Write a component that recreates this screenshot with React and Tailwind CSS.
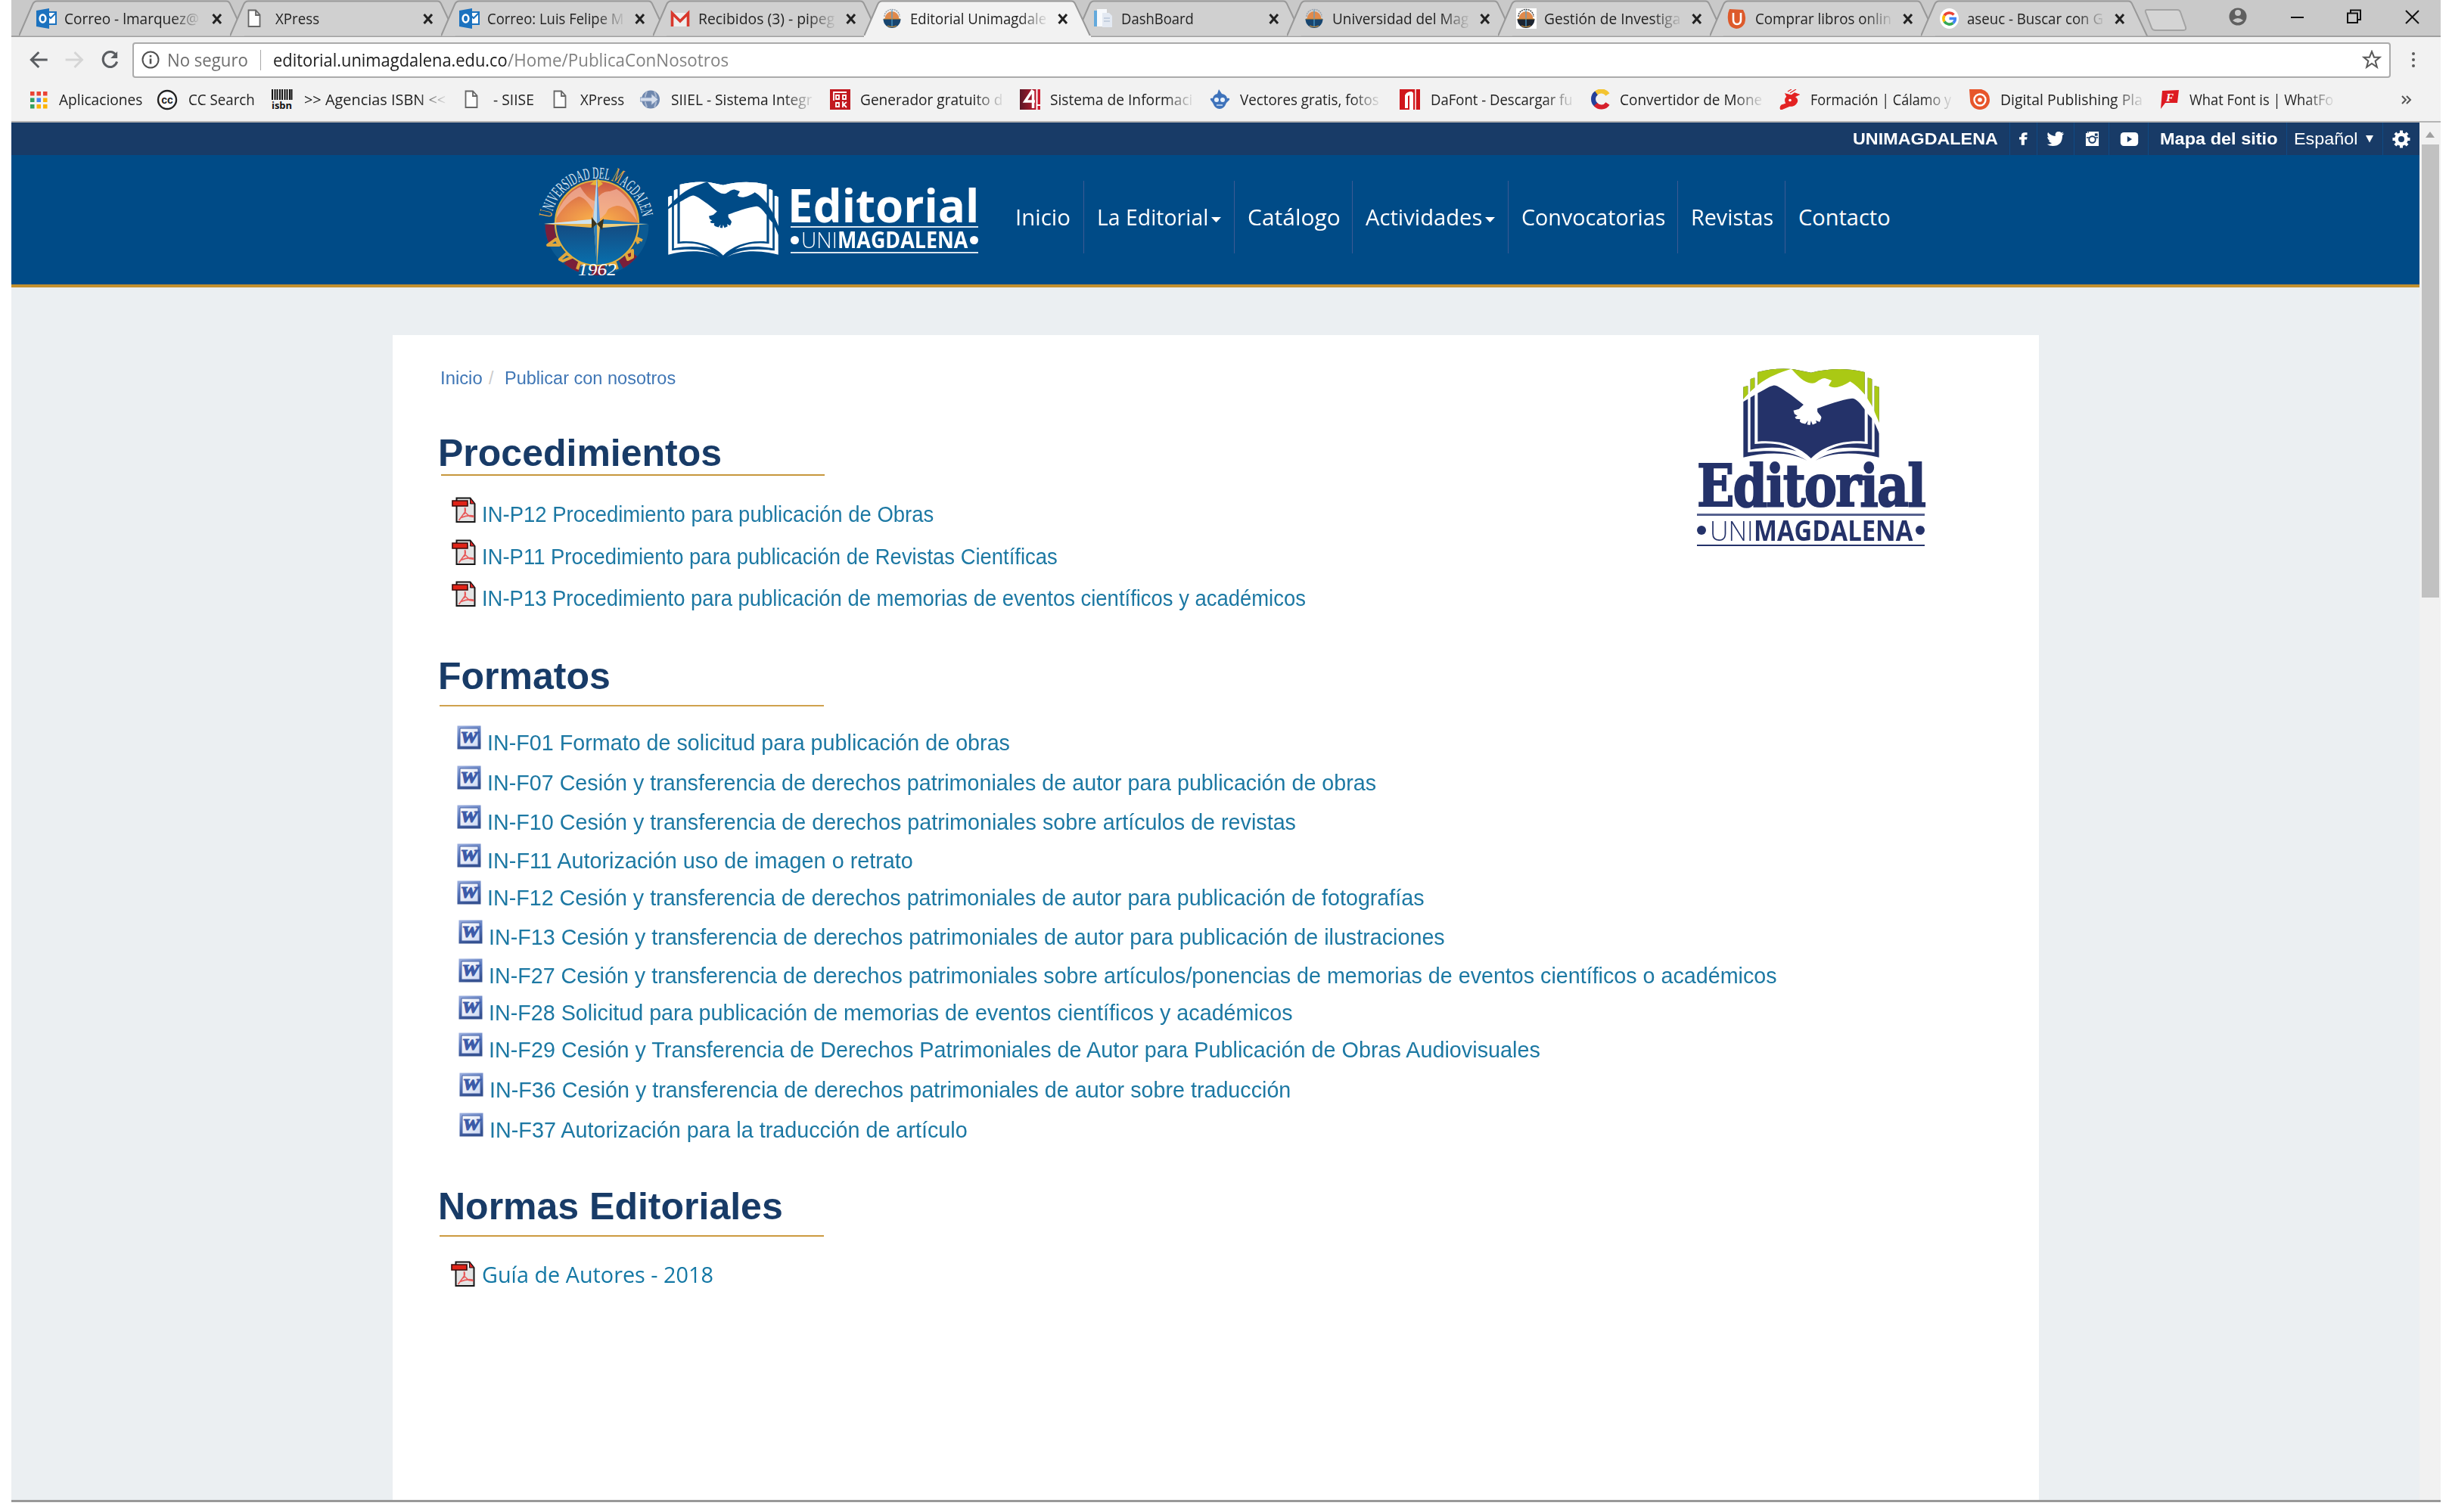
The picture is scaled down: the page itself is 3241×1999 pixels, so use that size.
import { useLayoutEffect, useRef } from "react";

/* Text squeezed or stretched horizontally so that it fills the width of its box. */
function Fit({ className = "", children }) {
  const box = useRef(null);
  const text = useRef(null);
  useLayoutEffect(() => {
    const scale = box.current.clientWidth / text.current.offsetWidth;
    text.current.style.transform = `scaleX(${scale})`;
  });
  return (
    <span ref={box} className={`block shrink-0 whitespace-pre ${className}`}>
      <span ref={text} className="inline-block origin-left">{children}</span>
    </span>
  );
}

/* ---------- small icons ---------- */

const Outlook = () => (
  <svg viewBox="0 0 27 27" className="size-[27px]">
    <rect x="13" y="5" width="13" height="16" fill="#fff" stroke="#1b72bf" strokeWidth="2" />
    <path d="M13 7l6 6 7-7" fill="none" stroke="#1b72bf" strokeWidth="2" />
    <path d="M0 3L17 0v27L0 24z" fill="#1b72bf" />
    <ellipse cx="8.5" cy="13.5" rx="3.8" ry="5" fill="none" stroke="#fff" strokeWidth="2.6" />
  </svg>
);
const Page = () => (
  <svg viewBox="0 0 27 27" className="size-[27px]">
    <path d="M1.500 2.500h9.500l5.500 6v15.500h-15zM11 2.500v6.500h5.500" fill="#fdfdfd" stroke="#666" strokeWidth="1.800" />
  </svg>
);
const Gmail = () => (
  <svg viewBox="0 0 27 27" className="size-[27px]">
    <path d="M2 6h22v18H2z" fill="#eee" />
    <path d="M2.500 24V6.500L13 17 23.500 6.500V24" fill="none" stroke="#d9382c" strokeWidth="3.600" />
  </svg>
);
const MiniSeal = ({ boxed }) => (
  <svg viewBox="0 0 27 27" className="size-[27px]">
    {boxed && <path d="M0 0h27v27H0z" fill="#fff" />}
    <path d="M3 11C3 5 8 1.500 13 1.500S23 5 23 11" fill="none" stroke={boxed ? "#444" : "#9aa3ad"} strokeWidth="1.500" strokeDasharray="2 1" />
    <path d="M3.500 14a9.500 10 0 0 1 19 0z" fill="#e08a4c" />
    <path d="M1.500 14h23a11.500 12 0 0 1-23 0z" fill={boxed ? "#1c2430" : "#17456f"} />
    <path d="M13 2v23" stroke="#4da0d0" strokeWidth="1.200" />
    <path d="M2 14h22M7 23q6 3 12 0" stroke="#c98b35" strokeWidth="1.200" fill="none" />
  </svg>
);
const Dash = () => (
  <svg viewBox="0 0 27 27" className="size-[27px]">
    <path d="M1 3h6v21H1z" fill="#62a9dc" />
    <path d="M5 1h13v23H5z" fill="#f7f9fc" />
    <path d="M12 6h9l4 4v15H12z" fill="#e3e9f2" />
    <path d="M14 13h8M14 17h8" stroke="#c4cfdf" strokeWidth="2" />
  </svg>
);
const UIcon = () => (
  <svg viewBox="0 0 27 27" className="size-[27px]">
    <path d="M3 1l18 1q5 8 2 18-4 7-11 7Q2 26 1 15 0 7 3 1z" fill="#dd5a2b" />
    <path d="M8 6v9q0 6 5 6t5-6V6" fill="none" stroke="#fff" strokeWidth="2.600" />
  </svg>
);
const GIcon = () => (
  <svg viewBox="0 0 27 27" className="size-[27px]">
    <ellipse cx="13.500" cy="13.500" rx="12.500" ry="13.500" fill="#fff" />
    <g fill="none" strokeWidth="3.600">
      <path d="M19.500 8.500A8 8 0 0 0 7 9.500" stroke="#ea4335" />
      <path d="M7 9.500a8 8 0 0 0 0 8" stroke="#fbbc05" />
      <path d="M7 17.500a8 8 0 0 0 11.500 2" stroke="#34a853" />
      <path d="M18.500 19.500q3-2.500 2.800-6H13.500" stroke="#4285f4" />
    </g>
  </svg>
);
const Apps = () => (
  <svg viewBox="0 0 24 24" className="size-6">
    {["#ea4335", "#ea4335", "#ea4335", "#34a060", "#4285f4", "#fbb305", "#34a060", "#fbb305", "#fbb305"].map((c, i) => (
      <rect key={i} x={(i % 3) * 8.5} y={1 + Math.floor(i / 3) * 8.5} width="5.500" height="5.500" fill={c} />
    ))}
  </svg>
);
const CC = () => (
  <svg viewBox="0 0 28 28" className="size-7">
    <circle cx="14" cy="14" r="12" fill="#fff" stroke="#222" strokeWidth="2.400" />
    <text x="14" y="18.500" textAnchor="middle" fontSize="14" fontWeight="700" fontFamily="Liberation Sans, sans-serif" fill="#222">cc</text>
  </svg>
);
const Isbn = () => (
  <svg viewBox="0 0 27 27" className="size-[27px] overflow-visible">
    <path d="M1 0v14M4.500 0v14M7.500 0v14M11 0v14M14 0v14M17.500 0v14M20.500 0v14M24 0v14M26.500 0v14" stroke="#111" strokeWidth="2" />
    <text x="0" y="26" fontSize="13" fontWeight="700" textLength="27" lengthAdjust="spacingAndGlyphs" fontFamily="Open Sans, sans-serif" fill="#111">isbn</text>
  </svg>
);
const Globe = () => (
  <svg viewBox="0 0 27 27" className="size-[27px]">
    <circle cx="14" cy="13.500" r="12" fill="#6d86ad" />
    <path d="M9 3q-5 10 0 21M19 3q5 10 0 21" stroke="#a9b8d0" strokeWidth="2" fill="none" />
    <path d="M0 11h15V6l9 7.500-9 7.500v-5H0z" fill="#d5deec" stroke="#8298bb" strokeWidth="1" />
  </svg>
);
const RedBook = () => (
  <svg viewBox="0 0 27 27" className="size-[27px]">
    <path d="M0 0h27v27H0z" fill="#c2191f" />
    <path d="M5 15V4h17M8 8h4v5H8zM17 8h4v5h-4zM8 18h4v5H8zM17 16v8M22 17l-4 3 4 4" fill="none" stroke="#fff" strokeWidth="1.800" />
  </svg>
);
const Four = () => (
  <svg viewBox="0 0 27 27" className="size-[27px]">
    <defs><linearGradient id="four" x2="1" y2="0"><stop stopColor="#5b1626" /><stop offset="1" stopColor="#d41c30" /></linearGradient></defs>
    <path d="M0 0h27v27H0z" fill="url(#four)" />
    <path d="M17 1L7 16h13M17.500 2v23" fill="none" stroke="#fff" strokeWidth="3.500" />
    <path d="M22.500 0v27" stroke="#fff" strokeWidth="2" />
    <path d="M22 21h5" stroke="#fff" strokeWidth="2" />
  </svg>
);
const Robot = () => (
  <svg viewBox="0 0 27 27" className="size-[27px]">
    <path d="M12 0l4 6q6 1 7 6 4-1 3 2l-4 4q-3 8-9 8t-9-8l-3-4q-1-3 3-2 1-5 6-6z" fill="#3f73bb" />
    <circle cx="9" cy="14" r="3" fill="#e9f1fb" /><circle cx="17" cy="14" r="3" fill="#e9f1fb" />
    <path d="M9 21h8" stroke="#cfe0f5" strokeWidth="1.500" />
  </svg>
);
const DaFont = () => (
  <svg viewBox="0 0 27 27" className="size-[27px]">
    <path d="M0 0h27v27H0z" fill="#d0161b" />
    <path d="M7 25V8q2-5 9-5l2 2v22h-5V8l-2 1v16z" fill="#fff" />
    <path d="M21 0v27" stroke="#fff" strokeWidth="1.500" />
  </svg>
);
const CIcon = () => (
  <svg viewBox="0 0 27 27" className="size-[27px]">
    <path d="M6 6a10 10 0 0 1 16 1" fill="none" stroke="#f3c431" strokeWidth="6" />
    <path d="M7 5a10 10 0 0 0 0 16" fill="none" stroke="#24409a" strokeWidth="6" />
    <path d="M6 20a10 10 0 0 0 16-1" fill="none" stroke="#d6202c" strokeWidth="6" />
  </svg>
);
const Calamo = () => (
  <svg viewBox="0 0 27 27" className="size-[27px]">
    <path d="M8 6l8 2 4-3 6 2-6 3q6 4 2 9-3 4-8 3L2 27q-2-3 1-6l6-2q-3-6 1-9zM11 3l5-3M14 5l8-5" fill="#e32222" stroke="#e32222" strokeWidth="1.200" />
    <circle cx="14" cy="14.500" r="1.800" fill="#fff" />
  </svg>
);
const Target = () => (
  <svg viewBox="0 0 27 27" className="size-[27px]">
    <path d="M0 0h16q11 3 11 14a13 13 0 0 1-26 0z" fill="#e7552b" />
    <circle cx="14" cy="14" r="7.500" fill="none" stroke="#fff" strokeWidth="2.400" />
    <circle cx="14" cy="14" r="2.800" fill="#fff" />
  </svg>
);
const FIcon = () => (
  <svg viewBox="0 0 27 27" className="size-[27px]">
    <path d="M3 2l22-1-2 17H7l-6 8z" fill="#dd1b22" />
    <text x="8" y="15.500" fontSize="15" fontWeight="700" fontStyle="italic" fontFamily="Liberation Serif, serif" fill="#fff">F</text>
  </svg>
);

const Pdf = () => (
  <svg viewBox="0 0 32 34" className="h-[34px] w-8 shrink-0">
    <path d="M6.500 5V1.500h18l6 7.500v24h-24V12" fill="#e4e4e4" stroke="#161616" strokeWidth="2" />
    <path d="M9 4.500h14l4 5v-1z" fill="#fff" />
    <path d="M24.500 1.500l6 7.500h-6z" fill="#e02424" stroke="#161616" />
    <path d="M17.500 14v6l-8 11M17.500 20l6 5.500 6.500 1M12 27.500q9-4 17-2.500M17.500 14q2 4-1 9" fill="none" stroke="#e85858" strokeWidth="1.600" />
    <path d="M1 5h20v7H1z" fill="#e02418" stroke="#3a0a0a" strokeWidth="1.600" />
  </svg>
);
const Word = () => (
  <svg viewBox="0 0 32 32" className="h-8 w-8 shrink-0">
    <defs>
      <linearGradient id="wb" x2="0.300" y2="1"><stop stopColor="#9fb2e0" /><stop offset="0.500" stopColor="#5877bd" /><stop offset="1" stopColor="#34508f" /></linearGradient>
      <linearGradient id="wp" x2="1" y2="1"><stop stopColor="#fff" /><stop offset="1" stopColor="#cfd9f2" /></linearGradient>
    </defs>
    <path d="M0.500 0.500h31v31h-31z" fill="url(#wb)" />
    <path d="M4 4h24v24H4z" fill="url(#wp)" stroke="#4763a6" strokeWidth="1" />
    <text x="4.500" y="23" fontSize="22" fontWeight="700" fontStyle="italic" textLength="23" lengthAdjust="spacingAndGlyphs" fontFamily="Liberation Serif, serif" fill="#3c5aa8" stroke="#3c5aa8" strokeWidth="1.200">W</text>
  </svg>
);

/* ---------- logos ---------- */

function Pages() {
  return (
    <>
      <path d="M366 153Q440 134 510 142L578 155Q690 128 791 153V430C700 422 625 450 578 497C530 450 460 422 366 430z" />
      <path d="M337 181Q345 176 354 176V440C430 432 480 445 520 468C470 450 400 450 337 462z" />
      <path d="M309 213Q318 208 327 208V473C420 462 500 465 562 506C500 470 400 470 309 493z" />
      <path d="M820 181Q812 176 803 176V440C727 432 677 445 637 468C687 450 757 450 820 462z" />
      <path d="M848 213Q839 208 830 208V473C737 462 657 465 595 506C657 470 757 470 848 493z" />
    </>
  );
}
function Book({ id, top, bottom, bird, className }) {
  return (
    <svg viewBox="308 138 541 371" preserveAspectRatio="none" className={className}>
      <clipPath id={id}>
        <path d="M300 130H860V376L846 372L815 310L790 270L741 225L578 240L497 180L366 220L300 269z" />
      </clipPath>
      <g fill={bottom}><Pages /></g>
      <g fill={top} clipPath={`url(#${id})`}><Pages /></g>
      <path
        fill={bird}
        d="M306 264L340 228L366 205C410 170 460 152 497 141L503 143C540 186 565 200 590 197C606 190 615 178 633 177L660 186L648 206C665 222 700 213 733 190C760 206 780 230 792 243L820 288L849 355V398L835 366L820 338L803 320L790 300C775 280 758 258 741 258C700 262 640 285 603 298V310C610 324 622 328 618 338L612 352L597 345L600 356L584 363L578 347L574 364L562 362L566 346L555 360L540 356L533 350L535 341L518 339L514 332L524 327L512 320L508 306L530 300L548 283L500 245C470 225 445 205 430 206C410 210 390 225 366 237L306 273z"
      />
    </svg>
  );
}

function Wordmark({ name, light, heavy, lines, bullet }) {
  return (
    <>
      {name}
      <div className={lines[0]} />
      <div className="flex items-center justify-between">
        <span className={bullet} />
        <div className="flex">
          {light}
          {heavy}
        </div>
        <span className={bullet} />
      </div>
      <div className={lines[1]} />
    </>
  );
}

function Seal() {
  return (
    <svg viewBox="0 0 156 151" className="mt-[11px] h-[151px] w-[156px] shrink-0 overflow-visible">
      <defs>
        <radialGradient id="sky" cx="0.500" cy="0.950" r="0.900"><stop stopColor="#fbb54a" /><stop offset="0.500" stopColor="#e8884a" /><stop offset="1" stopColor="#cc5a45" /></radialGradient>
        <linearGradient id="sea" x2="0" y2="1"><stop stopColor="#154a80" /><stop offset="1" stopColor="#0870ae" /></linearGradient>
        <path id="arc" d="M21.500 72.500A61 61 0 0 1 142.500 74" />
      </defs>
      <path d="M19.500 81A62.500 61 0 0 0 144.500 81" fill="none" stroke="#0b5a93" strokeWidth="12" />
      <path d="M19.500 81A62.500 61 0 0 0 144.500 81" fill="none" stroke="#7a1f3a" strokeWidth="12" strokeDasharray="24 30 20 16 18 22 22 60" />
      <g fill="none" stroke="#e0a73e" strokeWidth="4" strokeLinejoin="round">
        <path d="M17 108l11-8 4 8zM33 127l9-8 7 5-12 5zM56 140l3-9 9 3M109 140l-3-9-9 3M123 127l-3-8 9-4v9zM137 106l-4-8 9 4" />
      </g>
      <path d="M27 79a55 56 0 0 1 110 0z" fill="url(#sky)" />
      <path d="M27 79a55 56 0 0 0 110 0z" fill="url(#sea)" />
      <path d="M29 66Q40 40 60 31Q70 48 80 50Q88 36 99 37L108 34Q128 46 135 76Q122 56 108 56Q96 58 94 66L88 72Q82 76 76 70L77 62Q66 44 58 44Q42 50 28 73z" fill="#f3b6a3" opacity="0.700" />
      <ellipse cx="82" cy="79" rx="55" ry="56" fill="none" stroke="#e0b040" strokeWidth="2.200" />
      <path d="M82 16l4 60-4 4-5-4z" fill="#5a97d8" /><path d="M82 16v64l-5-4z" fill="#bcd9ea" />
      <path d="M82 137l-4-54 4-4 4 4z" fill="#e6bd62" /><path d="M82 137V79l-4 4z" fill="#2f7fb8" />
      <path d="M12 80l62-5 8 5-8 5z" fill="#e8b44c" /><path d="M12 80l62-6 8 6z" fill="#cfe3ee" />
      <path d="M150 80l-60-6-8 6 8 5z" fill="#2478b4" /><path d="M150 80l-60 5-8-5z" fill="#efcf7f" />
      <path d="M73 28l8-7v8zM83 20l7 7-7 5z" fill="#e7b437" />
      <path d="M75 71l7 9-7 6zM91 73l-9 7 7 8z" fill="#3a3420" />
      <text fontSize="22" fontFamily="Liberation Serif, serif" fill="#dfe8f2">
        <textPath href="#arc" textLength="181" lengthAdjust="spacingAndGlyphs">
          <tspan fill="#dfa344" fontSize="25">U</tspan>NIVERSIDAD DEL <tspan fill="#dfa344" fontSize="28" fontStyle="italic">M</tspan>AGDALENA
        </textPath>
      </text>
      <text x="57" y="148" fontSize="23" fontStyle="italic" textLength="51" lengthAdjust="spacingAndGlyphs" fontFamily="Liberation Serif, serif" fill="#fff">1962</text>
    </svg>
  );
}

/* ---------- browser chrome ---------- */

const tabs = [
  { icon: <Outlook />, text: "Correo - lmarquez@", w: "w-[178px]" },
  { icon: <Page />, text: "XPress", w: "w-[58px]" },
  { icon: <Outlook />, text: "Correo: Luis Felipe M", w: "w-[180px]" },
  { icon: <Gmail />, text: "Recibidos (3) - pipeg", w: "w-[180px]" },
  { icon: <MiniSeal />, text: "Editorial Unimagdale", w: "w-[180px]", active: true },
  { icon: <Dash />, text: "DashBoard", w: "w-[96px]" },
  { icon: <MiniSeal />, text: "Universidad del Mag", w: "w-[180px]" },
  { icon: <MiniSeal boxed />, text: "Gestión de Investiga", w: "w-[180px]" },
  { icon: <UIcon />, text: "Comprar libros onlin", w: "w-[180px]" },
  { icon: <GIcon />, text: "aseuc - Buscar con G", w: "w-[180px]" },
];
const fade = "[mask-image:linear-gradient(to_right,black_80%,transparent_102%)]";

function Tab({ icon, text, w, active }) {
  const long = text.length > 10;
  return (
    <div className={`relative -mr-[20.600px] h-[49px] w-[300px] shrink-0 ${active ? "z-10" : ""}`}>
      <svg viewBox="0 0 300 49" className="absolute inset-0 h-[49px] w-[300px]">
        <path d="M0 47.500L18 6Q20 1.500 24 1.500H274Q278 1.500 279.500 6L299 47.500" fill={active ? "#f2f2f2" : "#d0d0d0"} stroke="#989898" strokeWidth="2" />
        {active && <path d="M0 49v-2h300v2z" fill="#f2f2f2" />}
      </svg>
      <div className="relative flex h-[49px] items-center pl-[23.500px]">
        <div className="w-[37px] shrink-0">{icon}</div>
        <div className="w-[194px] shrink-0">
          <Fit className={`${w} ${long ? fade : ""}`}>{text}</Fit>
        </div>
        <svg viewBox="0 0 16 16" className="size-4"><path d="M2.500 2L13 14M13 2L2.500 14" stroke="#222" strokeWidth="3" /></svg>
      </div>
    </div>
  );
}

const bookmarks = [
  { icon: <Apps />, slot: "w-[38px]", text: "Aplicaciones", box: "w-[129px]", w: "w-[110px]" },
  { icon: <CC />, slot: "w-[42px]", text: "CC Search", box: "w-[110px]", w: "w-[88px]" },
  { icon: <Isbn />, slot: "w-[43px]", text: ">> Agencias ISBN <<", box: "w-[212px]", w: "w-[187px]", fade: true },
  { icon: <Page />, slot: "w-[38px]", text: "- SIISE", box: "w-[79px]", w: "w-[54px]" },
  { icon: <Page />, slot: "w-[36px]", text: "XPress", box: "w-[79px]", w: "w-[58px]" },
  { icon: <Globe />, slot: "w-[41px]", text: "SIIEL - Sistema Integr", box: "w-[210px]", w: "w-[187px]", fade: true },
  { icon: <RedBook />, slot: "w-[40px]", text: "Generador gratuito d", box: "w-[211px]", w: "w-[188px]", fade: true },
  { icon: <Four />, slot: "w-[40px]", text: "Sistema de Informaci", box: "w-[211px]", w: "w-[188px]", fade: true },
  { icon: <Robot />, slot: "w-[40px]", text: "Vectores gratis, fotos", box: "w-[211px]", w: "w-[184px]", fade: true },
  { icon: <DaFont />, slot: "w-[41px]", text: "DaFont - Descargar fu", box: "w-[212px]", w: "w-[188px]", fade: true },
  { icon: <CIcon />, slot: "w-[38px]", text: "Convertidor de Mone", box: "w-[211px]", w: "w-[188px]", fade: true },
  { icon: <Calamo />, slot: "w-[41px]", text: "Formación | Cálamo y", box: "w-[210px]", w: "w-[186px]", fade: true },
  { icon: <Target />, slot: "w-[41px]", text: "Digital Publishing Pla", box: "w-[211px]", w: "w-[188px]", fade: true },
  { icon: <FIcon />, slot: "w-[39px]", text: "What Font is | WhatFo", box: "w-[280px]", w: "w-[190px]", fade: true },
];

function Chrome() {
  return (
    <div className="font-['Open_Sans',sans-serif] text-[20px] leading-6 text-[#222]">
      <div className="flex h-[49px] bg-[#c9c9c9] pl-[9.500px] shadow-[inset_0_-2px_0_#a0a0a0]">
        {tabs.map((t) => <Tab key={t.text} {...t} />)}
        <svg viewBox="0 0 400 48" className="ml-[15px] h-12 w-[400px] shrink-0">
          <path d="M4 13h40q3 0 4 3l7 20q1 4-3 4H15q-4 0-5-3L2 16q-1-3 2-3z" fill="#d4d4d4" stroke="#a3a3a3" strokeWidth="2" />
          <circle cx="124" cy="22" r="11.500" fill="#5f5f5f" />
          <circle cx="124" cy="17" r="4" fill="#c9c9c9" /><path d="M117 27q7-6 14 0-7 6-14 0z" fill="#c9c9c9" />
          <path d="M194 23h17" stroke="#111" strokeWidth="2" />
          <path d="M269 17.500h13V30h-13zM273 17v-3.500h13V26h-4" fill="none" stroke="#111" strokeWidth="2" />
          <path d="M346 14l17 17M363 14l-17 17" stroke="#111" strokeWidth="2" />
        </svg>
      </div>
      <div className="flex h-[60px] items-center bg-[#f2f2f2] text-[23px]">
        <svg viewBox="0 0 161 40" className="h-10 w-[160px] shrink-0" fill="none" strokeWidth="3">
          <path d="M48 20H27M36.500 10l-10 10 10 10" stroke="#5a5d61" />
          <path d="M72 20h21M84 10l10 10-10 10" stroke="#d5d5d5" />
          <path d="M139 13.500a9.500 10 0 1 0 1.500 9" stroke="#5a5d61" />
          <path d="M141 9v9h-9z" fill="#5a5d61" />
        </svg>
        <div className="flex h-[47px] w-[2985px] items-center rounded-[4px] border-2 border-[#ababab] bg-white pl-[10px]">
          <svg viewBox="0 0 24 24" className="mr-[10px] size-6" fill="none" stroke="#505050" strokeWidth="2">
            <circle cx="12" cy="12" r="10.500" /><path d="M12 10.500v7M12 6v2.500" strokeWidth="2.600" />
          </svg>
          <Fit className="w-[107px] text-[#6e6e6e]">No seguro</Fit>
          <div className="mr-[16px] ml-4 h-[27px] w-px bg-[#a8a8a8]" />
          <Fit className="w-[310px] text-[#202020]">editorial.unimagdalena.edu.co</Fit>
          <Fit className="w-[292px] text-[#828282]">/Home/PublicaConNosotros</Fit>
          <svg viewBox="0 0 24 24" className="ml-auto mr-[10px] size-[26px]">
            <path d="M12 2l2.800 7h7l-5.500 4.600 2 7.400L12 16.600 5.700 21l2-7.400L2.200 9h7z" fill="none" stroke="#5a5a5a" strokeWidth="1.900" />
          </svg>
        </div>
        <div className="ml-[28px] flex flex-col gap-[4px]">
          <span className="size-1 rounded-full bg-[#5a5a5a]" />
          <span className="size-1 rounded-full bg-[#5a5a5a]" />
          <span className="size-1 rounded-full bg-[#5a5a5a]" />
        </div>
      </div>
      <div className="flex h-[53px] items-center border-b-2 border-[#b4b4b4] bg-[#f2f2f2] pb-[6px] pl-[25px]">
        {bookmarks.map((b) => (
          <div key={b.text + b.slot} className="flex shrink-0 items-center">
            <div className={`shrink-0 ${b.slot}`}>{b.icon}</div>
            <div className={`shrink-0 ${b.box}`}>
              <Fit className={`${b.w} ${b.fade ? fade : ""}`}>{b.text}</Fit>
            </div>
          </div>
        ))}
        <svg viewBox="0 0 14 12" className="h-3 w-[14px] shrink-0"><path d="M1 1l5 5-5 5M7 1l5 5-5 5" fill="none" stroke="#555" strokeWidth="2" /></svg>
      </div>
    </div>
  );
}

/* ---------- site header ---------- */

const Sep = ({ className }) => <div className={`h-full w-px shrink-0 bg-[#0f4a85] ${className}`} />;

function TopBar() {
  return (
    <div className="flex h-[43px] items-center bg-[#183b67] pl-[2434px] text-[22px] font-bold text-white">
      <Fit className="w-[192px]">UNIMAGDALENA</Fit>
      <Sep className="ml-[15px] mr-3" />
      <svg viewBox="0 0 12 18" className="h-[17px] w-[11px] shrink-0"><path d="M3 18V10H0V6.500h3V4.500Q3 0 8 0h3.500v3.500H9Q7.500 3.500 7.500 5v1.500h4L11 10H7.500v8z" fill="#fff" /></svg>
      <Sep className="mx-3" />
      <svg viewBox="0 0 24 20" className="h-[19px] w-6 shrink-0"><path d="M24 2.500l-2.500 2.700Q21.500 20 8 20 3.500 20 0 17.700q4 .3 7-2-3.500-.2-4.600-3.400h2Q.6 11 .7 7.400l2 .6Q-.500 5 1.500 1 5.500 6 11.700 6.200 10.800 0 16.500 0q2 0 3.600 1.500L23 .4l-2 2.700z" fill="#fff" /></svg>
      <Sep className="ml-3 mr-[14px]" />
      <svg viewBox="0 0 20 20" className="size-[19px] shrink-0"><path d="M1 2h2V0h1v2h1V0h14v20H1z" fill="#fff" /><path d="M2 8.500h4M14 8.500h4" stroke="#183b67" strokeWidth="1.500" /><circle cx="10" cy="11" r="4.500" fill="none" stroke="#183b67" strokeWidth="2" /><path d="M13.500 2.500h4v3.500h-4z" fill="#183b67" /></svg>
      <Sep className="ml-3 mr-[14px]" />
      <svg viewBox="0 0 26 20" className="h-[18px] w-[25px] shrink-0"><rect width="26" height="20" rx="5" fill="#fff" /><path d="M10 5.500l7 4.500-7 4.500z" fill="#183b67" /></svg>
      <Sep className="ml-3 mr-[15px]" />
      <Fit className="w-[155px]">Mapa del sitio</Fit>
      <Sep className="ml-3 mr-[9px]" />
      <Fit className="w-[85px] font-normal">Español</Fit>
      <svg viewBox="0 0 10 10" className="ml-[10px] size-[10px] shrink-0"><path d="M0 0h10L5 9.500z" fill="#fff" /></svg>
      <Sep className="ml-3 mr-3" />
      <svg viewBox="0 0 24 24" className="size-6 shrink-0">
        <circle cx="12" cy="12" r="6.300" fill="none" stroke="#fff" strokeWidth="5" />
        <path d="M12 .5v23M.5 12h23M3.900 3.900l16.200 16.200M20.100 3.900L3.900 20.100" stroke="#fff" strokeWidth="4" />
        <circle cx="12" cy="12" r="4" fill="#183b67" />
      </svg>
    </div>
  );
}

const menu = [
  { text: "Inicio", w: "w-[73px]", box: "w-[90px]" },
  { text: "La Editorial", w: "w-[147px]", box: "w-[199px]", caret: true },
  { text: "Catálogo", w: "w-[123px]", box: "w-[156px]" },
  { text: "Actividades", w: "w-[154px]", box: "w-[206px]", caret: true },
  { text: "Convocatorias", w: "w-[190px]", box: "w-[224px]" },
  { text: "Revistas", w: "w-[109px]", box: "w-[142px]" },
  { text: "Contacto", w: "w-[122px]", box: "w-[158px]" },
];

function Header() {
  return (
    <div className="flex h-[175px] items-start border-b-4 border-[#c2902f] bg-[#004b87] pl-[692px] text-white">
      <Seal />
      <Book id="headbook" top="#fff" bottom="#fff" bird="#004b87" className="mt-[35px] ml-5 h-[101px] w-[146px] shrink-0" />
      <div className="mt-[38px] ml-[16px] w-[248px] font-['Open_Sans',sans-serif]">
        <Wordmark
          name={<Fit className="-ml-1 h-[56px] w-[253px] text-[61px] leading-[56px] font-bold">Editorial</Fit>}
          lines={["h-0.5 bg-[#dbe6ef]", "h-0.5 bg-[#dbe6ef]"]}
          bullet="size-[11px] rounded-full bg-white"
          light={<Fit className="w-[48px] text-[30px] leading-8 font-light">UNI</Fit>}
          heavy={<Fit className="w-[172px] text-[30px] leading-8 font-bold">MAGDALENA</Fit>}
        />
      </div>
      <nav className="mt-[34px] ml-[49px] flex h-24 font-['Open_Sans',sans-serif] text-[29px] leading-[94px]">
        {menu.map((m, i) => (
          <div key={m.text} className={`flex h-24 shrink-0 items-center ${m.box} ${i ? "border-l border-[#3d5a94] pl-[17px]" : ""}`}>
            <Fit className={m.w}>{m.text}</Fit>
            {m.caret && <svg viewBox="0 0 13 7" className="mt-1.5 ml-1 h-[7px] w-[13px] shrink-0"><path d="M0 0h13L6.500 7z" fill="#fff" /></svg>}
          </div>
        ))}
      </nav>
    </div>
  );
}

/* ---------- page content ---------- */

const procedures = [
  { text: "IN-P12 Procedimiento para publicación de Obras", w: "w-[597px]", row: "h-14" },
  { text: "IN-P11 Procedimiento para publicación de Revistas Científicas", w: "w-[761px]", row: "h-[55px]" },
  { text: "IN-P13 Procedimiento para publicación de memorias de eventos científicos y académicos", w: "w-[1089px]", row: "h-[34px]" },
];
const forms = [
  { text: "IN-F01 Formato de solicitud para publicación de obras", w: "w-[691px]", row: "h-[53px]" },
  { text: "IN-F07 Cesión y transferencia de derechos patrimoniales de autor para publicación de obras", w: "w-[1175px]", row: "h-[52px]" },
  { text: "IN-F10 Cesión y transferencia de derechos patrimoniales sobre artículos de revistas", w: "w-[1069px]", row: "h-[51px]" },
  { text: "IN-F11 Autorización uso de imagen o retrato", w: "w-[563px]", row: "h-[49px]" },
  { text: "IN-F12 Cesión y transferencia de derechos patrimoniales de autor para publicación de fotografías", w: "w-[1239px]", row: "h-[52px]" },
  { text: "IN-F13 Cesión y transferencia de derechos patrimoniales de autor para publicación de ilustraciones", w: "w-[1264px]", row: "h-[51px] pl-0.5" },
  { text: "IN-F27 Cesión y transferencia de derechos patrimoniales sobre artículos/ponencias de memorias de eventos científicos o académicos", w: "w-[1703px]", row: "h-[49px] pl-0.5" },
  { text: "IN-F28 Solicitud para publicación de memorias de eventos científicos y académicos", w: "w-[1063px]", row: "h-[49px] pl-0.5" },
  { text: "IN-F29 Cesión y Transferencia de Derechos Patrimoniales de Autor para Publicación de Obras Audiovisuales", w: "w-[1390px]", row: "h-[53px] pl-0.5" },
  { text: "IN-F36 Cesión y transferencia de derechos patrimoniales de autor sobre traducción", w: "w-[1059px]", row: "h-[53px] pl-[3px]" },
  { text: "IN-F37 Autorización para la traducción de artículo", w: "w-[632px]", row: "h-8 pl-[3px]" },
];

function Links({ items, icon, className }) {
  return (
    <ul className={className}>
      {items.map((it) => (
        <li key={it.text} className={`flex items-start gap-2 ${it.row}`}>
          {icon}
          <Fit className={`mt-1.5 text-[29px] leading-[34px] text-[#1c78a3] ${it.w}`}>{it.text}</Fit>
        </li>
      ))}
    </ul>
  );
}
const heading = "text-[50px] leading-[56px] font-bold text-[#183b67]";

function Content() {
  return (
    <main className="ml-[504px] flex h-[1540px] w-[2176px] flex-col bg-white">
      <div className="flex h-[421px] justify-between pl-[62px]">
        <section>
          <div className="mt-[43px] ml-px flex h-7 text-[23px] leading-7 text-[#3f76b5]">
            <Fit className="w-[56px]">Inicio</Fit>
            <span className="ml-2 w-[21px] text-[#ccc]">/</span>
            <Fit className="w-[226px]">Publicar con nosotros</Fit>
          </div>
          <h2 className={`mt-[57px] -ml-[2px] ${heading}`}><Fit className="w-[375px]">Procedimientos</Fit></h2>
          <div className="ml-0.5 h-[2px] w-[507px] bg-[#c6973c]" />
          <Links items={procedures} icon={<Pdf />} className="mt-[28px] ml-4" />
        </section>
        <div className="mt-11 mr-[151px] flex w-[301px] flex-col">
          <Book id="sidebook" top="#aac914" bottom="#243269" bird="#fff" className="h-[123px] w-[180px] self-center" />
          <Wordmark
            name={<Fit className="h-[69px] w-[301px] font-['DejaVu_Serif',serif] text-[77px] leading-[65px] font-bold tracking-[-0.030em] text-[#243269] [-webkit-text-stroke:2px_#243269]">Editorial</Fit>}
            lines={["h-[3px] bg-[#56618f]", "h-0.5 bg-[#243269]"]}
            bullet="size-3 rounded-full bg-[#243269]"
            light={<Fit className="w-[58px] font-['Open_Sans',sans-serif] text-[37px] leading-[38px] font-light text-[#243269]">UNI</Fit>}
            heavy={<Fit className="w-[210px] font-['Open_Sans',sans-serif] text-[37px] leading-[38px] font-bold text-[#243269]">MAGDALENA</Fit>}
          />
        </div>
      </div>
      <section className="pl-[62px]">
        <h2 className={`mt-[2px] -ml-[2px] ${heading}`}><Fit className="w-[228px]">Formatos</Fit></h2>
        <div className="mt-[10px] h-[2px] w-[508px] bg-[#cfa24e]" />
        <Links items={forms} icon={<Word />} className="mt-[25px] ml-[23px]" />
      </section>
      <section className="pl-[62px]">
        <h2 className={`mt-[64px] -ml-[2px] ${heading}`}><Fit className="w-[456px]">Normas Editoriales</Fit></h2>
        <div className="mt-[10px] h-[2px] w-[508px] bg-[#cc9a40]" />
        <div className="mt-[32px] ml-[15px] flex gap-[9px] text-[29px] leading-[34px] text-[#1478a5]">
          <Pdf />
          <Fit className="mt-px w-[306px] font-['Open_Sans',sans-serif]">Guía de Autores - 2018</Fit>
        </div>
      </section>
    </main>
  );
}

export default function App() {
  return (
    <div className="h-[1999px] w-[3241px] overflow-hidden bg-white pl-[15px] font-['Liberation_Sans',sans-serif]">
      <div className="flex h-[1986px] w-[3211px] flex-col border-b-[3px] border-[#999]">
        <Chrome />
        <div className="flex grow">
          <div className="w-[3183px] bg-[#ebeff2]">
            <TopBar />
            <Header />
            <div className="h-[63px]" />
            <Content />
          </div>
          <div className="flex w-7 flex-col items-center bg-[#f1f1f1]">
            <svg viewBox="0 0 12 8" className="mt-3 h-2 w-3"><path d="M0 8h12L6 0z" fill="#a0a0a0" /></svg>
            <div className="mt-[9px] h-[599px] w-[23px] bg-[#c1c1c1]" />
          </div>
        </div>
      </div>
    </div>
  );
}
